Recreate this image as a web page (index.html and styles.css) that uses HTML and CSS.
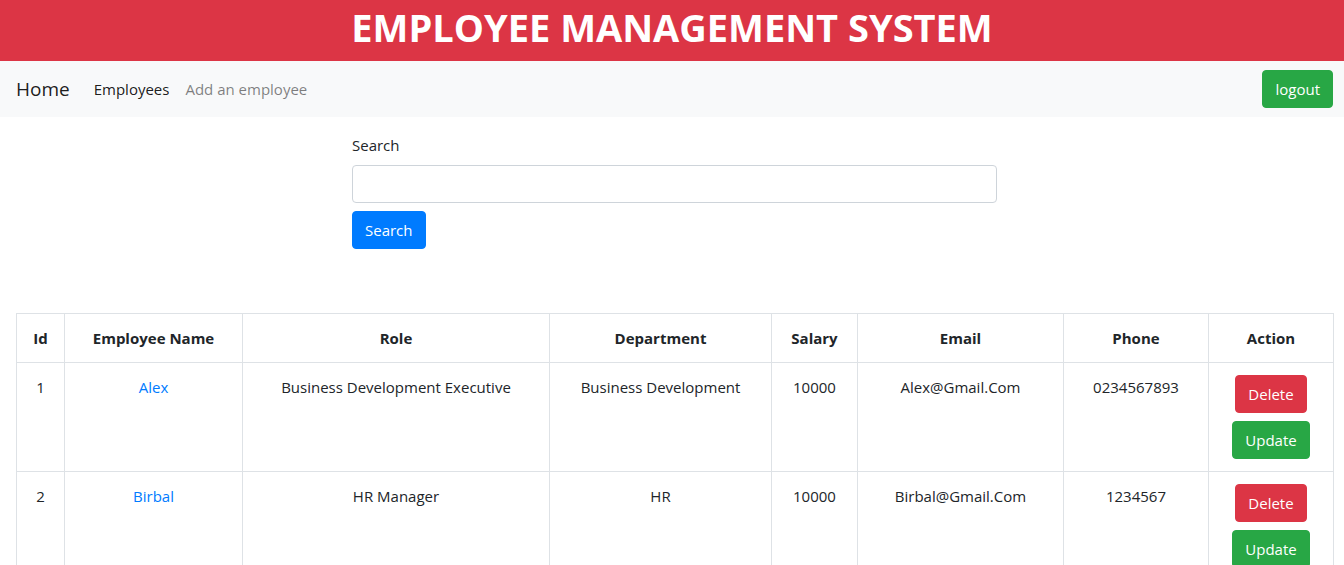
FILE: index.html
```html
<!DOCTYPE html>
<html lang="en">
<head>
<meta charset="utf-8">
<title>Employee Management System</title>
<link rel="stylesheet" href="styles.css">
</head>
<body>
<header class="banner">
  <h1 class="banner-title">EMPLOYEE MANAGEMENT SYSTEM</h1>
</header>
<nav class="navbar">
  <a class="brand" href="#">Home</a>
  <a class="nav-link active" href="#">Employees</a>
  <a class="nav-link" href="#">Add an employee</a>
  <button class="btn btn-success logout">logout</button>
</nav>
<main class="content">
  <form class="search-form">
    <label class="search-label" for="q">Search</label>
    <input id="q" class="search-input" type="text">
    <button type="button" class="btn btn-primary">Search</button>
  </form>
  <table class="emp-table">
    <thead>
      <tr>
        <th class="c-id">Id</th>
        <th class="c-name">Employee Name</th>
        <th class="c-role">Role</th>
        <th class="c-dept">Department</th>
        <th class="c-sal">Salary</th>
        <th class="c-mail">Email</th>
        <th class="c-phone">Phone</th>
        <th class="c-act">Action</th>
      </tr>
    </thead>
    <tbody>
      <tr>
        <td>1</td>
        <td><a class="name-link" href="#">Alex</a></td>
        <td>Business Development Executive</td>
        <td>Business Development</td>
        <td>10000</td>
        <td>Alex@Gmail.Com</td>
        <td>0234567893</td>
        <td><div class="actions"><button class="btn btn-danger">Delete</button><button class="btn btn-success">Update</button></div></td>
      </tr>
      <tr>
        <td>2</td>
        <td><a class="name-link" href="#">Birbal</a></td>
        <td>HR Manager</td>
        <td>HR</td>
        <td>10000</td>
        <td>Birbal@Gmail.Com</td>
        <td>1234567</td>
        <td><div class="actions"><button class="btn btn-danger">Delete</button><button class="btn btn-success">Update</button></div></td>
      </tr>
    </tbody>
  </table>
</main>
</body>
</html>
```

FILE: styles.css
```css
* { box-sizing: border-box; }
body {
  margin: 0;
  font-family: "Open Sans", "Noto Sans", sans-serif;
  font-size: 15px;
  line-height: 24px;
  color: #212529;
  background: #fff;
}
.banner {
  background: #dc3545;
  height: 61px;
  display: flex;
  justify-content: center;
  align-items: flex-start;
}
.banner-title {
  margin: 0;
  padding-top: 4px;
  color: #fff;
  font-size: 38px;
  line-height: 46px;
  font-weight: 700;
}
.navbar {
  background: #f8f9fa;
  height: 56px;
  display: flex;
  align-items: center;
  padding: 0 11px 0 16px;
}
.brand {
  font-size: 19px;
  color: rgba(0,0,0,.9);
  text-decoration: none;
  margin-right: 24px;
}
.nav-link {
  text-decoration: none;
  color: rgba(0,0,0,.5);
  margin-right: 16px;
}
.nav-link.active { color: rgba(0,0,0,.9); }
.logout { margin-left: auto; }
.btn {
  font-family: inherit;
  font-size: 15px;
  line-height: 24px;
  padding: 6px 12px;
  border: 1px solid transparent;
  border-radius: 4px;
  color: #fff;
  cursor: pointer;
}
.btn-success { background: #28a745; border-color: #28a745; }
.btn-primary { background: #007bff; border-color: #007bff; }
.btn-danger { background: #dc3545; border-color: #dc3545; }
.content { padding: 16px 11px 0 16px; }
.search-form {
  width: 645px;
  margin-left: 336px;
  display: flex;
  flex-direction: column;
  align-items: flex-start;
}
.search-label { margin-bottom: 8px; }
.search-input {
  width: 100%;
  height: 38px;
  border: 1px solid #ced4da;
  border-radius: 4px;
  margin-bottom: 8px;
}
.emp-table {
  margin-top: 64px;
  width: 1317px;
  border-collapse: collapse;
  table-layout: fixed;
}
.emp-table th, .emp-table td {
  border: 1px solid #dee2e6;
  padding: 12px;
  text-align: center;
  vertical-align: top;
}
.emp-table th { font-weight: 700; }
.c-id { width: 48px; }
.c-name { width: 178px; }
.c-role { width: 307px; }
.c-dept { width: 222px; }
.c-sal { width: 86px; }
.c-mail { width: 206px; }
.c-phone { width: 145px; }
.c-act { width: 125px; }
.name-link { color: #007bff; text-decoration: none; }
.actions {
  display: flex;
  flex-direction: column;
  align-items: center;
  gap: 8px;
}
```
